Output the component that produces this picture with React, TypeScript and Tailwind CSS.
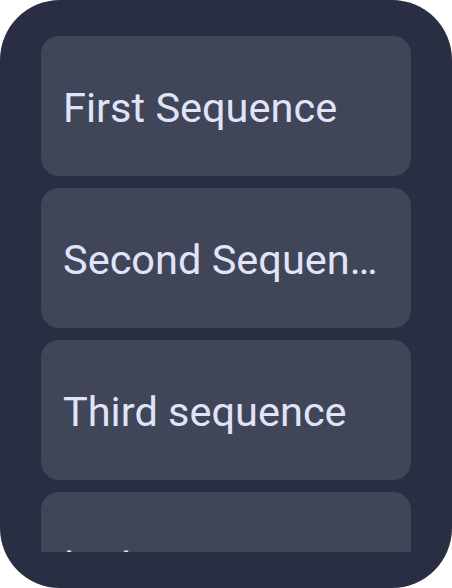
import React from 'react';

const sequences = ['First Sequence', 'Second Sequence', 'Third sequence', 'test sequence'];

export default function App(): React.ReactElement {
  return (
    <div className="h-[588px] w-[452px] rounded-[60px] bg-[#2a2e42] px-[41px] py-9">
      <div className="flex h-full flex-col gap-3 overflow-hidden">
        {sequences.map((name) => (
          <div
            key={name}
            className="flex h-[140px] shrink-0 items-center rounded-[18px] bg-[#404558] pl-[22px] pr-[24px] pt-[5px]"
          >
            <span className="truncate font-['Roboto',sans-serif] text-[41.5px] text-[#e0e4fa]">
              {name}
            </span>
          </div>
        ))}
      </div>
    </div>
  );
}
